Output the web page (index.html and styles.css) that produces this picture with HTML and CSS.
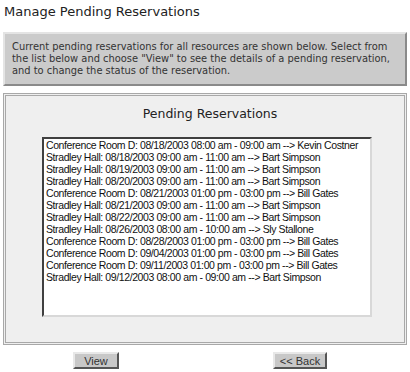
FILE: index.html
```html
<!DOCTYPE html>
<html>
<head>
    <title>Manage Pending Reservations</title>
    <link rel="stylesheet" href="styles.css">
</head>
<body>
    <h1 class="page-title">Manage Pending Reservations</h1>

    <div class="info-box">
        Current pending reservations for all resources are shown below. Select from<br>
        the list below and choose "View" to see the details of a pending reservation,<br>
        and to change the status of the reservation.
    </div>

    <div class="panel">
        <h2 class="panel-title">Pending Reservations</h2>
        <div class="listbox">
            <div class="item">Conference Room D: 08/18/2003 08:00 am - 09:00 am --&gt; Kevin Costner</div>
            <div class="item">Stradley Hall: 08/18/2003 09:00 am - 11:00 am --&gt; Bart Simpson</div>
            <div class="item">Stradley Hall: 08/19/2003 09:00 am - 11:00 am --&gt; Bart Simpson</div>
            <div class="item">Stradley Hall: 08/20/2003 09:00 am - 11:00 am --&gt; Bart Simpson</div>
            <div class="item">Conference Room D: 08/21/2003 01:00 pm - 03:00 pm --&gt; Bill Gates</div>
            <div class="item">Stradley Hall: 08/21/2003 09:00 am - 11:00 am --&gt; Bart Simpson</div>
            <div class="item">Stradley Hall: 08/22/2003 09:00 am - 11:00 am --&gt; Bart Simpson</div>
            <div class="item">Stradley Hall: 08/26/2003 08:00 am - 10:00 am --&gt; Sly Stallone</div>
            <div class="item">Conference Room D: 08/28/2003 01:00 pm - 03:00 pm --&gt; Bill Gates</div>
            <div class="item">Conference Room D: 09/04/2003 01:00 pm - 03:00 pm --&gt; Bill Gates</div>
            <div class="item">Conference Room D: 09/11/2003 01:00 pm - 03:00 pm --&gt; Bill Gates</div>
            <div class="item">Stradley Hall: 09/12/2003 08:00 am - 09:00 am --&gt; Bart Simpson</div>
        </div>
    </div>

    <div class="buttons">
        <button class="btn btn-view">View</button>
        <button class="btn btn-back">&lt;&lt; Back</button>
    </div>
</body>
</html>
```

FILE: styles.css
```css
body {
    margin: 0;
    padding: 0 3px;
    background: #ffffff;
    font-family: "DejaVu Sans", Verdana, sans-serif;
    color: #222;
}
.page-title {
    margin: 0;
    padding: 4px 1px 0;
    height: 28px;
    font-size: 13px;
    font-weight: normal;
    color: #222;
}
.info-box {
    background: #cbcbcb;
    border: 2px solid;
    border-color: #e4e4e4 #8a8a8a #8a8a8a #e4e4e4;
    padding: 7px 8px 5px 7px;
    font-size: 9.9px;
    line-height: 12px;
    color: #333;
    height: 38px;
    white-space: nowrap;
}
.panel {
    margin-top: 7px;
    background: #efefef;
    border: 3px double #a8a8a8;
    height: 246px;
}
.panel-title {
    margin: 0;
    padding: 10px 0 0 10px;
    height: 31px;
    text-align: center;
    font-size: 12.5px;
    line-height: 15px;
    font-weight: normal;
    color: #222;
}
.listbox {
    margin: 0 32px 0 36px;
    height: 176px;
    background: #fff;
    border: 2px solid;
    border-color: #404040 #d8d8d8 #d8d8d8 #404040;
    padding: 0 0 0 2px;
    font-family: "Liberation Sans", Arial, sans-serif;
    font-size: 10.5px;
    letter-spacing: -0.4px;
    line-height: 12px;
    color: #111;
}
.item {
    white-space: nowrap;
}
.buttons {
    display: flex;
    padding-top: 7px;
}
.btn {
    height: 17px;
    padding: 0;
    background: #c8c8c8;
    border: 2px solid;
    border-color: #e8e8e8 #555 #555 #e8e8e8;
    font-family: "Liberation Sans", Arial, sans-serif;
    font-size: 11px;
    color: #333;
}
.btn-view {
    margin-left: 70px;
    width: 46px;
}
.btn-back {
    margin-left: 154px;
    width: 54px;
}
```
